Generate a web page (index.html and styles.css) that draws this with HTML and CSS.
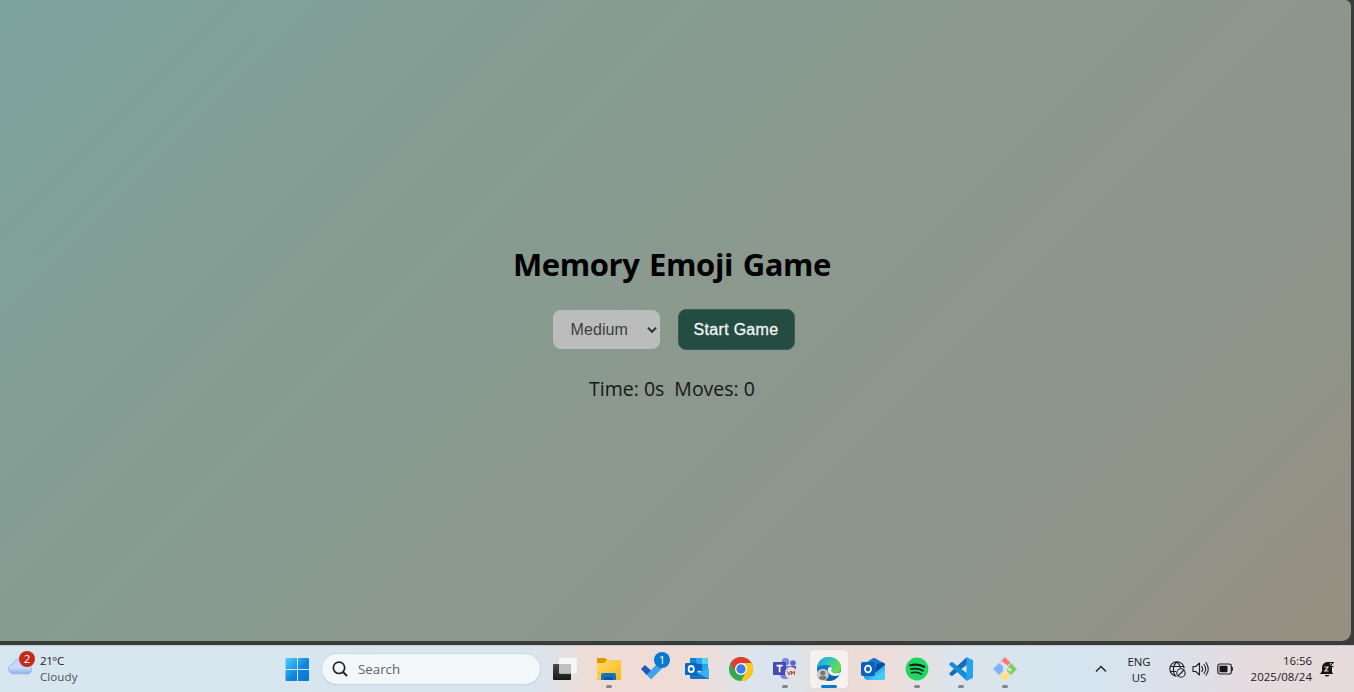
FILE: index.html
```html
<!DOCTYPE html>
<html lang="en">
<head>
<meta charset="utf-8">
<title>Memory Emoji Game</title>
<link rel="stylesheet" href="styles.css">
</head>
<body>
<div class="desktop">
  <main class="game">
    <h1 class="title">Memory Emoji Game</h1>
    <div class="controls">
      <div class="level"><span>Medium</span>
        <svg class="chevron" viewBox="0 0 10 8"><path d="M1 1.800 5 5.800 9 1.800" fill="none" stroke="#303332" stroke-width="2"/></svg>
      </div>
      <button class="start">Start Game</button>
    </div>
    <div class="stats"><span class="time">Time: 0s</span><span class="moves">Moves: 0</span></div>
  </main>
  <footer class="taskbar">
    <div class="weather">
      <svg class="cloud" viewBox="0 0 30 26">
        <defs><linearGradient id="cl" x2="0" y2="1"><stop stop-color="#c0d4f7"/><stop offset=".6" stop-color="#c9dafa"/><stop offset="1" stop-color="#8db0ee"/></linearGradient></defs>
        <path d="M5.500 23.800a4.900 4.900 0 0 1-.3-9.800C6.500 10 9 8.500 12.500 8.500c4 0 6.500 3 7 6.500 5.500 0 5.500 8.800 0 8.800z" fill="url(#cl)" stroke="#8fa9de" stroke-width=".7"/>
        <circle cx="19" cy="9" r="8" fill="#c42b1c"/>
        <text x="19" y="13" text-anchor="middle" class="badge-text">2</text>
      </svg>
      <div class="weather-text"><span>21°C</span><span class="muted">Cloudy</span></div>
    </div>
    <div class="apps">
      <div class="app windows">
        <svg class="icon" viewBox="0 0 24 24"><defs><linearGradient id="wn" x2="1" y2="1"><stop stop-color="#4cd0fb"/><stop offset=".55" stop-color="#0f86de"/><stop offset="1" stop-color="#0676d4"/></linearGradient></defs><path d="M1.500 1H12v11H.5V2a1 1 0 0 1 1-1zM13 1h10a1 1 0 0 1 1 1v10H13zM.5 13H12v11H1.500a1 1 0 0 1-1-1zM13 13h11v10a1 1 0 0 1-1 1H13z" fill="url(#wn)"/></svg>
      </div>
      <div class="search">
        <svg class="lens" viewBox="0 0 16 16"><circle cx="7" cy="6.800" r="5.700" fill="none" stroke="#252525" stroke-width="1.700"/><path d="m11 11 4 4" stroke="#252525" stroke-width="2"/></svg>
        <span>Search</span>
      </div>
      <div class="app">
        <svg class="icon" viewBox="0 0 24 24"><defs><linearGradient id="tv" x2="0" y2="1"><stop stop-color="#4b4b4b"/><stop offset="1" stop-color="#171717"/></linearGradient></defs><rect y="7" width="18" height="16" rx="1" fill="url(#tv)"/><rect x="6" y="1" width="17.700" height="15.500" rx="1" fill="#f6f6f6"/><path d="M6 7h12v9.500H7a1 1 0 0 1-1-1z" fill="#c1c1c1"/></svg>
      </div>
      <div class="app running">
        <svg class="icon" viewBox="0 0 24 24"><defs><linearGradient id="fd" x2="1" y2="1"><stop stop-color="#ffda68"/><stop offset="1" stop-color="#fbb817"/></linearGradient></defs><path d="M0 2q0-1 1-1h7l2.500 2H23v5H0z" fill="#d89b08"/><path d="M0 6h7l3-3h13q1 0 1 1v18q0 1-1 1H1q-1 0-1-1z" fill="url(#fd)"/><path d="M4 23v-5q0-2 2-2h11q2 0 2 2v5z" fill="#1172c8"/><path d="M8 20h7q1 0 1 1v2H7v-2q0-1 1-1z" fill="#0b56a0"/></svg>
      </div>
      <div class="app">
        <svg class="icon wide" viewBox="0 -6 30 30"><path d="M5.500 17.500 18 5l5 4.500L10 22.500z" fill="#40a3ec"/><path d="m4 8 6 5.500-4.500 4.500L0 12z" fill="#1d59bc"/><circle cx="21" cy="3" r="8" fill="#0878d1"/><text x="21" y="7" text-anchor="middle" class="badge-text">1</text></svg>
      </div>
      <div class="app">
        <svg class="icon" viewBox="0 0 24 24"><path d="M5 1h18v13H5z" fill="#1681d8"/><path d="M11 1h6v6h-6z" fill="#28a7e9"/><path d="M17 1h5q1 0 1 1v5h-6z" fill="#50d4fa"/><path d="M17 7h6v6h-6z" fill="#27a4e8"/><path d="M11 7h6v6h-6z" fill="#0c66bd"/><path d="m12 16 12-5v11H12z" fill="#36b3ee"/><path d="m5 12 19 10H6q-1 0-1-1z" fill="#1474c8"/><rect y="6" width="12.500" height="12" rx="1" fill="#0668c5"/><ellipse cx="6.200" cy="12" rx="2.600" ry="3" fill="none" stroke="#fff" stroke-width="1.800"/></svg>
      </div>
      <div class="app">
        <svg class="icon" viewBox="0 0 24 24"><circle cx="12" cy="12" r="12" fill="#36a853"/><path d="M12 6h10.400A12 12 0 0 1 12 24l5.200-9z" fill="#fdc91e"/><path d="M12 6h10.400A12 12 0 0 0 1.600 6l5.200 9z" fill="#e43b32"/><circle cx="12" cy="12" r="6" fill="#fff"/><circle cx="12" cy="12" r="4.700" fill="#397ee9"/></svg>
      </div>
      <div class="app running">
        <svg class="icon" viewBox="0 0 24 24"><circle cx="20" cy="6" r="2.800" fill="#5960c8"/><path d="M16 9h7v7q0 3-3 4h-4z" fill="#5158bd"/><circle cx="12.500" cy="4.700" r="3.800" fill="#7b83eb"/><path d="M7 9h11v8q0 5-5.500 5T7 17z" fill="#777fe5"/><rect y="5" width="13" height="13" rx="1" fill="#454db4"/><path d="M3.500 8.700h6.200M6.600 8v7.300" stroke="#fff" stroke-width="1.700"/><circle cx="18" cy="16" r="6" fill="#f0dcd4"/><path d="m14 14 2 4 1.500-4M18.500 18v-4l1.500 2.500 1.500-2.500v4" fill="none" stroke="#76554c" stroke-width=".9"/></svg>
      </div>
      <div class="app active">
        <svg class="icon" viewBox="0 0 24 24"><defs><linearGradient id="eg" y2=".4"><stop stop-color="#1b9de2"/><stop offset=".5" stop-color="#31c4c4"/><stop offset="1" stop-color="#68dc45"/></linearGradient><linearGradient id="eb" x2="0" y2="1"><stop stop-color="#1389d4"/><stop offset="1" stop-color="#1058ad"/></linearGradient></defs><circle cx="12" cy="12" r="12" fill="url(#eb)"/><path d="M0 11C1 3 6 0 12 0c7 0 12 5 12 10.500 0 4-3 6-6.500 6-4 0-4.500-1.500-3-3.500 1-2-1-5-5.500-5-5 0-8 1-9 3z" fill="url(#eg)"/><path d="M11 11q2.500-2 4 0c0 2-1.500 3-.5 4 2.500 2 6.500 1.500 9.500 0l-1.500 3c-6 3-13-1-11.500-7z" fill="#f8f3f0"/><circle cx="5.800" cy="17.800" r="6" fill="#c9c9c9"/><circle cx="5.800" cy="16" r="2.500" fill="#777"/><path d="M2 21.500q0-2.700 3.800-2.700t3.800 2.700q-3.800 3-7.600 0z" fill="#777"/></svg>
      </div>
      <div class="app">
        <svg class="icon" viewBox="0 0 24 24"><path d="M3 7 13 1l11 6v13q0 3-3 3H7q-4 0-4-4z" fill="#28a5e9"/><path d="M3 7 11.500 1.500q1.500-1 3 0L24 7l-10 7H3z" fill="#1378d2"/><path d="m16 7 6-1.500 2 1.500v2l-10 7z" fill="#0b4b9f"/><path d="M24 8v12q0 3-3 3H8z" fill="#44caf4"/><path d="m14 16 10-8v5L9 23H6z" fill="#38baee"/><rect y="5" width="14" height="14" rx="2" fill="#0a61c2"/><ellipse cx="7" cy="12" rx="3" ry="3.400" fill="none" stroke="#fff" stroke-width="1.800"/></svg>
      </div>
      <div class="app running">
        <svg class="icon" viewBox="0 0 24 24"><circle cx="12" cy="12" r="11.400" fill="#1ed760"/><g fill="none" stroke="#102016" stroke-linecap="round"><path d="M5.200 8.300q7.500-2 14 1.500" stroke-width="2.200"/><path d="M5.900 12.200q6.500-1.700 12 1.500" stroke-width="1.800"/><path d="M6.500 15.800q5.500-1.300 10 1.300" stroke-width="1.500"/></g></svg>
      </div>
      <div class="app running">
        <svg class="icon" viewBox="0 0 24 24"><path d="m.6 16 17-15.800 1 7L3.500 18.800q-.6.500-1.300 0L.6 17.500q-.8-.7 0-1.500z" fill="#126fb7"/><path d="m.6 8 17 15.800 1-7L3.500 5.200q-.6-.5-1.300 0L.6 6.500q-.8.700 0 1.500z" fill="#178bd2"/><path d="m17.500.1 5.700 2.600q.8.400.8 1.300v16q0 .9-.8 1.300l-5.700 2.600z" fill="#26a2ec"/></svg>
      </div>
      <div class="app running">
        <svg class="icon" viewBox="0 0 24 24"><path d="m12 0 5.500 5.500-4 4L12 8 9 6l-2-1z" fill="#fb7b7d"/><path d="M6 6 0 12l6 6 4-4V9z" fill="#80b3ff"/><path d="m18 6 6 6-6 6-4-4 1-4z" fill="#80cf5c"/><path d="m12 13 5.500 5.500L12 24l-5.500-5.500z" fill="#ffe07b"/><path d="m8 4 4 4v9M12 8l5 5" fill="none" stroke="#e5e5e9" stroke-width="1.300"/><circle cx="12" cy="8.500" r="1.800" fill="#e5e5e9"/><circle cx="12" cy="17" r="1.800" fill="#eee5d0"/><circle cx="17" cy="12.800" r="1.600" fill="#dce8df"/></svg>
      </div>
    </div>
    <div class="tray">
      <svg class="caret" viewBox="0 0 12 8"><path d="m1 6.500 5-5 5 5" fill="none" stroke="#202020" stroke-width="1.400"/></svg>
      <div class="lang"><span>ENG</span><span>US</span></div>
      <svg class="globe" viewBox="0 0 17 17"><g fill="none" stroke="#202020" stroke-width="1.100"><path d="M7.500 15.200A7.200 7.200 0 1 1 15.200 7.500M1.500 5.500h13M1.500 10.500H7M6.500 15C3.500 12 3.500 4 8 1c2.500 2 3.300 4 3.400 6"/><circle cx="12" cy="12" r="4.200"/><path d="m9 15 6-6"/></g></svg>
      <svg class="speaker" viewBox="0 0 17 16"><g fill="none" stroke="#202020" stroke-width="1.100" stroke-linejoin="round" stroke-linecap="round"><path d="M1 5.500h2.700L7.500 2v12l-3.800-3.500H1z"/><path d="M9.800 5.500q1.800 2.500 0 5M12 3.500q3.400 4.500 0 9M14 1.700q4.500 6.300 0 12.600"/></g></svg>
      <svg class="battery" viewBox="0 0 17 12"><rect x=".8" y="1" width="13.500" height="10" rx="2.200" fill="none" stroke="#202020" stroke-width="1.200"/><rect x="2.500" y="2.800" width="8" height="6.400" rx=".7" fill="#151515"/><path d="M15.200 4v4" stroke="#202020" stroke-width="1.300"/></svg>
      <div class="clock"><span>16:56</span><span class="date">2025/08/24</span></div>
      <svg class="bell" viewBox="0 0 15 16"><path d="M2 7q0-5 5-6h3v4h2v6l1 2H0l2-3zM4.500 14h5q-2.500 3-5 0z" fill="#151515"/><path d="M4.500 6H8L5 10h3.500" fill="none" stroke="#e9dfe0" stroke-width="1.200"/><path d="M9.500 1.500h3.500L9.800 5.500h3.700" fill="none" stroke="#151515" stroke-width="1.200"/></svg>
    </div>
  </footer>
</div>
</body>
</html>
```
FILE: styles.css
```css
* { box-sizing: border-box; }
body { margin: 0; font-family: "Open Sans", "Noto Sans", sans-serif; color: #1b1b1b; }
svg { display: block; flex: none; overflow: visible; }
.desktop { width: 1354px; height: 692px; overflow: hidden; display: flex; flex-direction: column; background: #3a3c3b; }
.game { width: 1351px; height: 641px; margin-bottom: 4px; flex: none; border-radius: 0 6px 9px 0; background: linear-gradient(135deg, #7ba39c 0%, #839e95 22%, #8b998e 50%, #8f958a 78%, #969082 100%); display: flex; flex-direction: column; align-items: center; padding: 242px 7px 0 0; }
.title { margin: 0; height: 44px; line-height: 44px; font-size: 31px; font-weight: 700; color: #000; white-space: nowrap; letter-spacing: -0.4px; word-spacing: 2px; }
.controls { display: flex; align-items: center; gap: 18px; margin: 23px 0 0 3px; height: 41px; }
.level { width: 107px; height: 39px; border-radius: 8px; background: #bbbdbc; color: #3c3e3d; font: 16px "Liberation Sans", sans-serif; display: flex; align-items: center; justify-content: space-between; padding: 0 3px 0 18px; letter-spacing: .1px; }
.chevron { width: 10px; height: 8px; }
.start { width: 117px; height: 41px; padding: 0; border: 1px solid #355f53; border-radius: 8px; background: #254c42; color: #f2f5f4; font: 16px "Liberation Sans", sans-serif; -webkit-text-stroke: .3px #f2f5f4; letter-spacing: .3px; }
.stats { display: flex; gap: 10px; margin-top: 25px; height: 28px; line-height: 28px; font-size: 19.5px; color: #151716; white-space: nowrap; }
.taskbar { height: 47px; flex: none; display: grid; grid-template-columns: 275px 1fr 271px; border-top: 1px solid #c5c9cd; background: linear-gradient(90deg, #d8e6ef 0, #d8e5ef 535px, #efdcd7 590px, #efdcd6 700px, #dce4ec 750px, #dae4ed 785px, #eddbd6 850px, #eddcd8 885px, #dce4ed 955px, #d4e5ef 1080px, #dbe1ec 1170px, #e6dbde 1250px, #e7dadc 1354px); }
.weather { display: flex; padding: 4px 0 0 8px; }
.cloud { width: 30px; height: 26px; }
.badge-text { font: 11.5px "Open Sans", sans-serif; fill: #fff; }
.weather-text { display: flex; flex-direction: column; font-size: 11.5px; line-height: 16px; margin: 3px 0 0 2px; letter-spacing: -.4px; }
.weather-text .muted { color: #4c5157; letter-spacing: .1px; }
.apps { display: flex; }
.app { width: 44px; height: 46px; padding-top: 11px; display: flex; flex-direction: column; align-items: center; flex: none; }
.windows { padding-right: 1px; }
.icon { width: 24px; height: 24px; }
.icon.wide { width: 30px; height: 30px; margin: -6px -6px 0 0; }
.running::after { content: ""; width: 6px; height: 3px; margin-top: 4px; border-radius: 2px; background: #868689; }
.active { width: 38px; height: 38px; margin: 4px 3px 0; padding-top: 7px; border-radius: 4px; background: #f6f1ef; box-shadow: 0 0 1px #cbbdb8; }
.active::after { content: ""; width: 16px; height: 3px; margin-top: 4px; border-radius: 2px; background: #0878d3; }
.search { width: 218px; height: 30px; margin: 8px 3px 0 3px; border-radius: 16px; background: #f2f7fa; box-shadow: 0 0 0 1px #ccd8e2, 0 1px 1px #97a4ae; display: flex; align-items: center; flex: none; gap: 10px; padding-left: 10px; font-size: 13.3px; color: #5d6165; }
.lens { width: 16px; height: 16px; }
.tray { display: flex; align-items: flex-start; font-size: 11.4px; line-height: 16px; color: #202020; }
.caret { width: 12px; height: 8px; margin: 19px 0 0 12px; }
.lang { width: 24px; display: flex; flex-direction: column; align-items: center; margin: 8px 18px 0 20px; }
.globe { width: 17px; height: 17px; margin-top: 15px; }
.speaker { width: 17px; height: 16px; margin: 15px 0 0 6px; }
.battery { width: 17px; height: 12px; margin: 17px 0 0 8px; }
.clock { width: 78px; display: flex; flex-direction: column; align-items: flex-end; margin-top: 7px; white-space: nowrap; }
.date { letter-spacing: .1px; }
.bell { width: 15px; height: 16px; margin: 15px 0 0 8px; }
```
